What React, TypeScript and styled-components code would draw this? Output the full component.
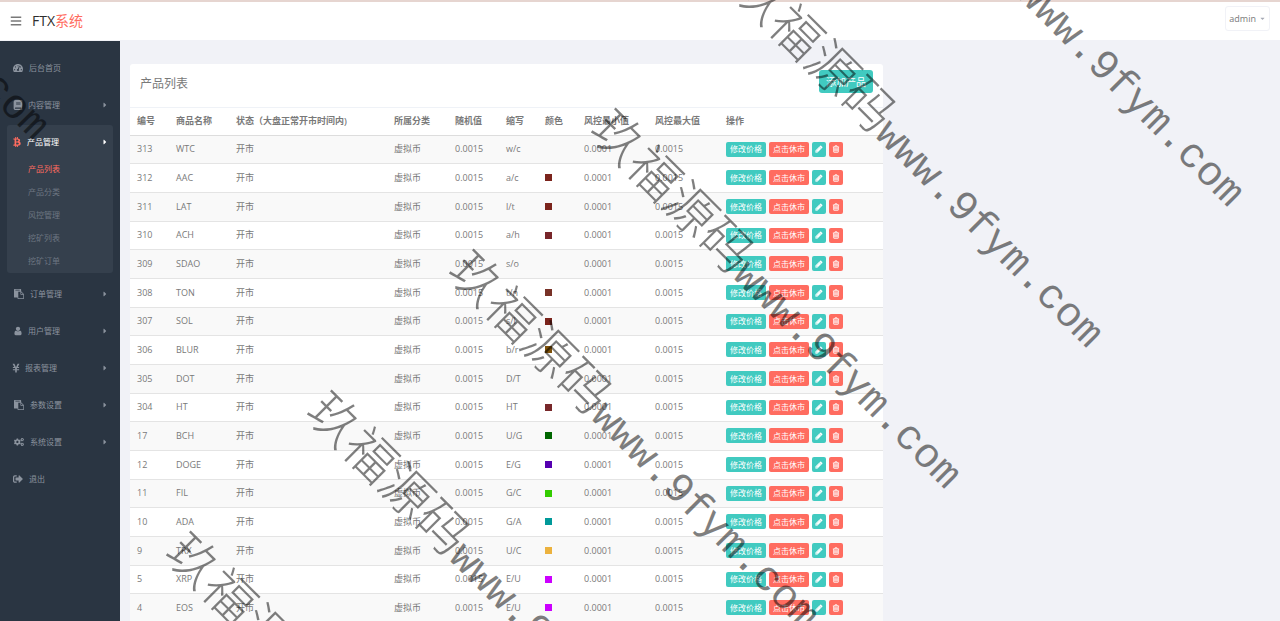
import React from "react";
import styled, { createGlobalStyle } from "styled-components";
import { FaBars, FaTachometerAlt, FaBook, FaBtc, FaYenSign, FaCogs, FaSignOutAlt, FaCaretRight, FaCaretDown } from "react-icons/fa";

const TEAL = "#41cac0";
const RED = "#ff6c60";

const GlobalStyle = createGlobalStyle`
  * { box-sizing: border-box; }
  body {
    margin: 0;
    background: #f1f2f7;
    color: #797979;
    font: 9px/12px "Open Sans", "Noto Sans CJK SC", sans-serif;
  }
  button { font-family: inherit; cursor: pointer; }
  a { text-decoration: none; color: inherit; }
  ul { list-style: none; margin: 0; padding: 0; }
`;

const Page = styled.div`
  position: relative;
  display: flex;
  flex-direction: column;
  height: 100vh;
  overflow: hidden;
`;

const Header = styled.header`
  display: flex;
  align-items: center;
  flex: none;
  height: 41px;
  padding: 0 10px;
  background: #fff;
  border-top: 2px solid #e6d5d0;
  border-bottom: 1px solid #f1f2f7;
`;

const MenuToggle = styled.button`
  display: flex;
  padding: 0;
  border: 0;
  background: none;
  color: #797979;
  font-size: 12px;
`;

const Logo = styled.a`
  margin-left: 10px;
  color: #2e2e2e;
  font-size: 14px;
  line-height: 20px;
  span { color: ${RED}; }
`;

const UserMenu = styled.button`
  display: flex;
  align-items: center;
  align-self: flex-start;
  gap: 3px;
  height: 25px;
  margin-top: 4px;
  margin-left: auto;
  padding: 0 3px;
  border: 1px solid #f1f2f7;
  border-radius: 3px;
  background: #fff;
  color: #797979;
  font-size: 9px;
  svg { font-size: 7px; color: #a5a9b5; }
`;

const Body = styled.div`
  display: flex;
  flex: 1;
  min-height: 0;
`;

const Sidebar = styled.nav`
  flex: none;
  width: 120px;
  padding: 10px 7px;
  background: #2a3542;
`;

const MenuItem = styled.li<{ $active?: boolean }>`
  margin-bottom: 4px;
  border-radius: 3px;
  color: ${(p) => (p.$active ? "#fff" : "#8b939e")};
  background: ${(p) => (p.$active ? "#35404d" : "transparent")};
`;

const MenuLink = styled.a`
  display: flex;
  align-items: center;
  gap: 6px;
  height: 33px;
  padding: 0 4px 0 6px;
  font-size: 8px;
  > svg { margin-left: auto; }
`;

const MenuIcon = styled.span<{ $width: number; $active?: boolean }>`
  display: flex;
  justify-content: center;
  flex: none;
  width: ${(p) => p.$width}px;
  font-size: 10px;
  color: ${(p) => (p.$active ? RED : "inherit")};
  svg { flex: none; }
`;

const SubMenu = styled.ul`
  margin-top: -1px;
  padding-bottom: 1px;
`;

const SubLink = styled.a<{ $active?: boolean }>`
  display: block;
  height: 23px;
  padding-left: 21px;
  font-size: 8px;
  line-height: 23px;
  color: ${(p) => (p.$active ? RED : "#6d7682")};
`;

const Main = styled.main`
  flex: 1;
  min-width: 0;
  padding: 23px 10px 0;
`;

const Panel = styled.section`
  width: 66%;
  min-width: 753px;
  background: #fff;
  border-radius: 3px;
`;

const PanelHeading = styled.div`
  display: flex;
  align-items: flex-start;
  justify-content: space-between;
  height: 44px;
  padding: 6px 10px;
  border-bottom: 1px solid #eff2f7;
`;

const Title = styled.h1`
  margin: 0;
  padding-top: 5px;
  font-size: 12px;
  line-height: 18px;
  font-weight: 400;
`;

const AddButton = styled.button`
  height: 23px;
  padding: 0 7px;
  border: 0;
  border-radius: 3px;
  background: ${TEAL};
  color: #fff;
  font-size: 10px;
`;

const Table = styled.table`
  width: 100%;
  table-layout: fixed;
  border-collapse: collapse;
  th, td { padding: 0 7px; text-align: left; white-space: nowrap; }
  th { height: 27px; font-weight: 600; border-bottom: 1px solid #ddd; }
  td { height: 29px; border-bottom: 1px solid #e4e4e4; }
  tbody tr:nth-child(3n + 1) td { height: 28px; }
  tbody tr:nth-child(odd) { background: #f9f9f9; }
`;

const Swatch = styled.span<{ $color: string }>`
  display: block;
  width: 7px;
  height: 7px;
  background: ${(p) => p.$color};
`;

const Actions = styled.div`
  display: flex;
  gap: 3px;
`;

const ActionButton = styled.button<{ $color: string; $icon?: boolean }>`
  display: flex;
  align-items: center;
  justify-content: center;
  width: ${(p) => (p.$icon ? "14px" : "40px")};
  height: 15px;
  padding: 0;
  border: 0;
  border-radius: 2px;
  background: ${(p) => p.$color};
  color: #fff;
  font-size: 8px;
  line-height: 12px;
`;

const Overlay = styled.div`
  position: absolute;
  inset: 0;
  overflow: hidden;
  pointer-events: none;
`;

const Mark = styled.div<{ $x: number; $y: number }>`
  position: absolute;
  left: ${(p) => p.$x}px;
  top: ${(p) => p.$y}px;
  transform: rotate(45deg);
  transform-origin: 0 50%;
  color: rgba(0, 0, 0, 0.5);
  font: 300 51px/60px "Noto Sans CJK SC", sans-serif;
  white-space: nowrap;
  span { font: 42px/60px "Liberation Mono", monospace; }
`;

const Glyph = ({ d, solid }: { d: string; solid?: boolean }) => (
  <svg
    width="1em"
    height="1em"
    viewBox="0 0 1792 1792"
    fill="currentColor"
    stroke={solid ? "currentColor" : "none"}
    strokeWidth={solid ? 60 : 0}
    aria-hidden="true"
  >
    <path d={d} />
  </svg>
);

const PENCIL =
  "M491 1536l91-91-235-235-91 91v107h128v128h107zm523-928q0-22-22-22-10 0-17 7l-542 542q-7 7-7 17 0 22 22 22 10 0 17-7l542-542q7-7 7-17zm-54-192l416 416-832 832h-416v-416zm683 96q0 53-37 90l-166 166-416-416 166-165q36-38 90-38 53 0 91 38l235 234q37 39 37 91z";
const TRASH =
  "M704 736v576q0 14-9 23t-23 9h-64q-14 0-23-9t-9-23v-576q0-14 9-23t23-9h64q14 0 23 9t9 23zm256 0v576q0 14-9 23t-23 9h-64q-14 0-23-9t-9-23v-576q0-14 9-23t23-9h64q14 0 23 9t9 23zm256 0v576q0 14-9 23t-23 9h-64q-14 0-23-9t-9-23v-576q0-14 9-23t23-9h64q14 0 23 9t9 23zm128 724v-948h-896v948q0 22 7 40.5t14.5 27 10.5 8.5h832q3 0 10.5-8.5t14.5-27 7-40.5zm-672-1076h448l-48-117q-7-9-17-11h-317q-10 2-17 11zm928 32v64q0 14-9 23t-23 9h-96v948q0 83-47 143.5t-113 60.5h-832q-66 0-113-58.5t-47-141.5v-952h-96q-14 0-23-9t-9-23v-64q0-14 9-23t23-9h309l70-167q15-37 54-63t79-26h320q40 0 79 26t54 63l70 167h309q14 0 23 9t9 23z";
const PASTE =
  "M768 1664h896v-640h-416q-40 0-68-28t-28-68v-416h-384v1152zm256-1440v-64q0-13-9.5-22.5t-22.5-9.5h-704q-13 0-22.5 9.5t-9.5 22.5v64q0 13 9.5 22.5t22.5 9.5h704q13 0 22.5-9.5t9.5-22.5zm256 672h299l-299-299v299zm512 128v672q0 40-28 68t-68 28h-960q-40 0-68-28t-28-68v-160h-544q-40 0-68-28t-28-68v-1344q0-40 28-68t68-28h1088q40 0 68 28t28 68v328q21 13 36 28l408 408q28 28 48 76t20 88z";
const USER =
  "M1536 1399q0 109-62.500 187t-150.500 78h-854q-88 0-150.500-78t-62.500-187q0-85 8.500-160.500t31.500-152 58.500-131 94-89 134.500-34.500q131 128 313 128t313-128q76 0 134.500 34.500t94 89 58.500 131 31.500 152 8.500 160.500zm-256-887q0 159-112.500 271.500t-271.500 112.500-271.500-112.500-112.500-271.500 112.500-271.500 271.500-112.500 271.500 112.500 112.500 271.500z";

const PasteIcon = () => <Glyph d={PASTE} />;
const UserIcon = () => <Glyph d={USER} />;

const menu = [
  { label: "后台首页", icon: FaTachometerAlt, width: 10, leaf: true },
  { label: "内容管理", icon: FaBook, width: 9 },
  { label: "产品管理", icon: FaBtc, width: 8, children: ["产品列表", "产品分类", "风控管理", "挖矿列表", "挖矿订单"] },
  { label: "订单管理", icon: PasteIcon, width: 11 },
  { label: "用户管理", icon: UserIcon, width: 9 },
  { label: "报表管理", icon: FaYenSign, width: 6 },
  { label: "参数设置", icon: PasteIcon, width: 11 },
  { label: "系统设置", icon: FaCogs, width: 11 },
  { label: "退出", icon: FaSignOutAlt, width: 10, leaf: true },
];

const columns: [string, number][] = [
  ["编号", 39],
  ["商品名称", 60],
  ["状态（大盘正常开市时间内)", 158],
  ["所属分类", 61],
  ["随机值", 51],
  ["缩写", 39],
  ["颜色", 39],
  ["风控最小值", 71],
  ["风控最大值", 71],
  ["操作", 164],
];

const rows: [number, string, string, string][] = [
  [313, "WTC", "w/c", ""],
  [312, "AAC", "a/c", "#7b241c"],
  [311, "LAT", "l/t", "#7b241c"],
  [310, "ACH", "a/h", "#78262a"],
  [309, "SDAO", "s/o", ""],
  [308, "TON", "t/n", "#783228"],
  [307, "SOL", "s/l", "#7b241c"],
  [306, "BLUR", "b/r", "#7e5109"],
  [305, "DOT", "D/T", ""],
  [304, "HT", "HT", "#78282a"],
  [17, "BCH", "U/G", "#006600"],
  [12, "DOGE", "E/G", "#5500b0"],
  [11, "FIL", "G/C", "#33cc00"],
  [10, "ADA", "G/A", "#009999"],
  [9, "TRX", "U/C", "#ecb23e"],
  [5, "XRP", "E/U", "#cc00ff"],
  [4, "EOS", "E/U", "#cc00ff"],
];

const marks: [number, number][] = [
  [-313, -264],
  [-171, -405],
  [882, -197],
  [741, -56],
  [599, 85],
  [457, 226],
  [315, 367],
  [174, 508],
];

export default function App() {
  return (
    <Page>
      <GlobalStyle />
      <Header>
        <MenuToggle aria-label="菜单"><FaBars /></MenuToggle>
        <Logo href="#">FTX<span>系统</span></Logo>
        <UserMenu>admin <FaCaretDown /></UserMenu>
      </Header>
      <Body>
        <Sidebar>
          <ul>
            {menu.map(({ label, icon: Icon, width, leaf, children }) => (
              <MenuItem key={label} $active={!!children}>
                <MenuLink href="#">
                  <MenuIcon $width={width} $active={!!children}><Icon /></MenuIcon>
                  <span>{label}</span>
                  {!leaf && <FaCaretRight />}
                </MenuLink>
                {children && (
                  <SubMenu>
                    {children.map((c, i) => (
                      <li key={c}><SubLink href="#" $active={i === 0}>{c}</SubLink></li>
                    ))}
                  </SubMenu>
                )}
              </MenuItem>
            ))}
          </ul>
        </Sidebar>
        <Main>
          <Panel>
            <PanelHeading>
              <Title>产品列表</Title>
              <AddButton>添加产品</AddButton>
            </PanelHeading>
            <Table>
              <colgroup>
                {columns.map(([name, width]) => <col key={name} style={{ width }} />)}
              </colgroup>
              <thead>
                <tr>{columns.map(([name]) => <th key={name}>{name}</th>)}</tr>
              </thead>
              <tbody>
                {rows.map(([id, name, short, color]) => (
                  <tr key={id}>
                    <td>{id}</td>
                    <td>{name}</td>
                    <td>开市</td>
                    <td>虚拟币</td>
                    <td>0.0015</td>
                    <td>{short}</td>
                    <td>{color && <Swatch $color={color} />}</td>
                    <td>0.0001</td>
                    <td>0.0015</td>
                    <td>
                      <Actions>
                        <ActionButton $color={TEAL}>修改价格</ActionButton>
                        <ActionButton $color={RED}>点击休市</ActionButton>
                        <ActionButton $color={TEAL} $icon aria-label="编辑"><Glyph d={PENCIL} solid /></ActionButton>
                        <ActionButton $color={RED} $icon aria-label="删除"><Glyph d={TRASH} solid /></ActionButton>
                      </Actions>
                    </td>
                  </tr>
                ))}
              </tbody>
            </Table>
          </Panel>
        </Main>
      </Body>
      <Overlay aria-hidden="true">
        {marks.map(([x, y]) => (
          <Mark key={x} $x={x} $y={y}>玖福源码<span>www.9fym.com</span></Mark>
        ))}
      </Overlay>
    </Page>
  );
}
